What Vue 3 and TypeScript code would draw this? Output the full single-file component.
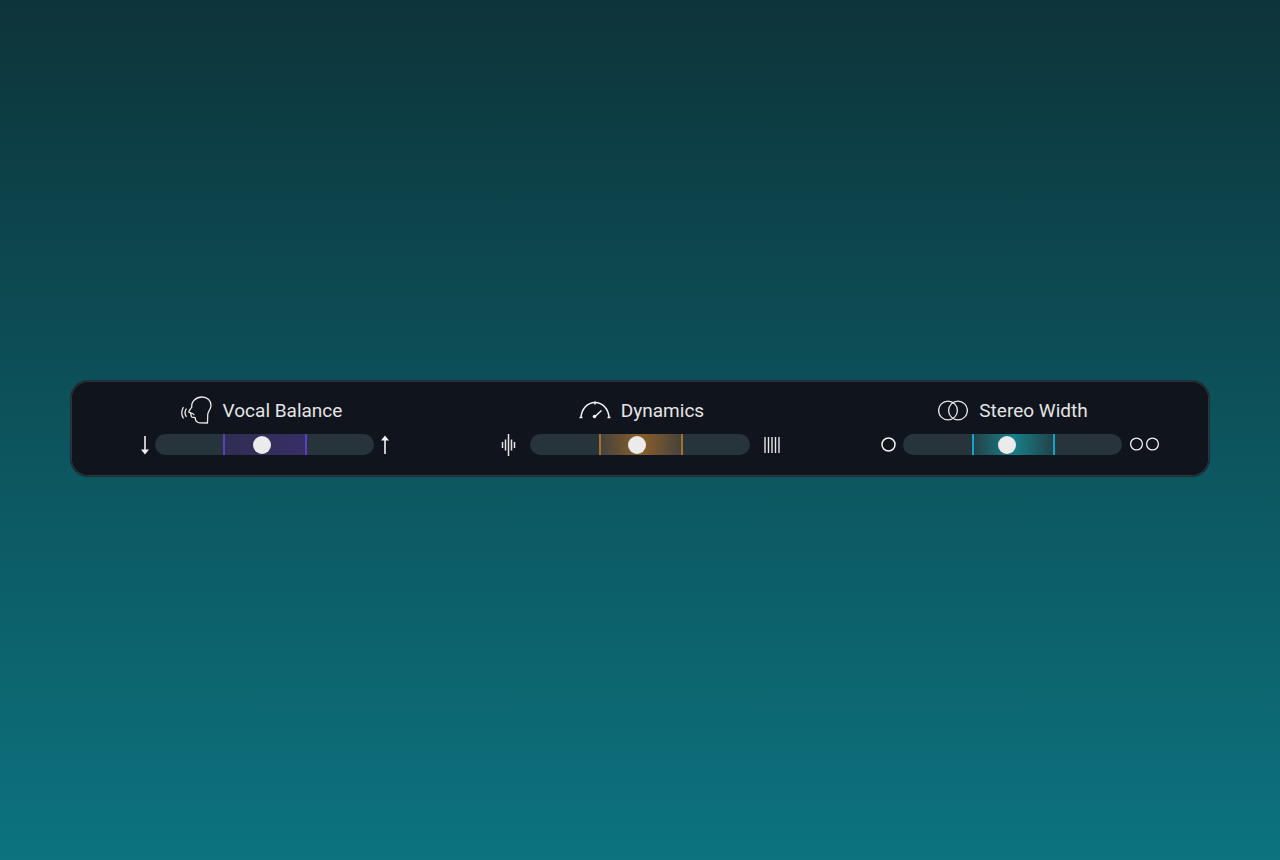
<script setup lang="ts">
const bands = {
  vocal: { left: '68px', width: '84px' },
  dynamics: { left: '69px', width: '84px' },
  stereo: { left: '69px', width: '83px' },
}
</script>

<template>
  <main class="page">
    <section class="panel">
      <div class="col">
        <div class="title t1">
          <svg width="32" height="30" viewBox="0 0 32 30" fill="none" stroke="#e8e8e8" stroke-width="1.3" stroke-linecap="round" stroke-linejoin="round">
            <path d="M26.5 28 L18.5 27.8 C15.5 27.5 14.2 26 14.2 22.6 L11 22.2 C9.8 21.8 10.4 20.6 10 19.8 C9.4 19 9.8 18.4 9.6 17.6 L7.8 17.2 C7.2 16.4 9.8 13.8 10.8 12 C10 6.5 15 2 21 2 C26.6 2 30.2 6 30 10.5 C29.8 14.5 27.2 16 26.8 19 C26.6 22 26.6 25 26.5 28 Z" />
            <path d="M9.8 18.2 C11 18.2 12.2 18.6 13 19.6" />
            <path d="M5.2 14 C3.8 16.3 3.8 19.2 5.2 21.5" />
            <path d="M2.2 12.5 C0.4 15.8 0.4 19.8 2.2 23" />
          </svg>
          <span>Vocal Balance</span>
        </div>
        <div class="row">
          <div class="slot left g5">
            <svg width="10" height="22" viewBox="0 0 10 22"><path d="M5 2V16" stroke="#f2f2f2" stroke-width="1.6" /><path d="M1 15.5H9L5 20.5Z" fill="#f2f2f2" /></svg>
          </div>
          <div class="track">
            <div class="band purple" :style="bands.vocal"></div>
            <div class="thumb th1"></div>
          </div>
          <div class="slot right g6">
            <svg width="10" height="22" viewBox="0 0 10 22"><path d="M5 20V6" stroke="#f2f2f2" stroke-width="1.6" /><path d="M1 6.5H9L5 1.5Z" fill="#f2f2f2" /></svg>
          </div>
        </div>
      </div>

      <div class="col">
        <div class="title t2">
          <svg width="32" height="20" viewBox="0 0 32 20" fill="none" stroke="#f0f0f0" stroke-width="1.6">
            <path d="M2 17.5 C2.5 9 8.5 2.5 16 2.5 C23.5 2.5 29.5 9 30 17.5" />
            <path d="M.5 17.5H3.5M28.5 17.5H31.5M16 1.5V4.5" />
            <path d="M16 16.5L22.5 10.5" />
            <circle cx="15.5" cy="16.5" r="1.8" fill="#f0f0f0" stroke="none" />
          </svg>
          <span>Dynamics</span>
        </div>
        <div class="row">
          <div class="slot left g14">
            <svg width="15" height="24" viewBox="0 0 15 24" stroke="#e6e6e6" stroke-width="1.5">
              <path d="M1.5 9V15M4.5 6.5V17.5M7.5 1V23M10.5 6.5V17.5M13.5 9V15" />
            </svg>
          </div>
          <div class="track wide">
            <div class="band amber" :style="bands.dynamics"></div>
            <div class="thumb th2"></div>
          </div>
          <div class="slot right g14">
            <svg width="16" height="18" viewBox="0 0 16 18" stroke="#e6e6e6" stroke-width="1.4">
              <path d="M1 1V17M4.5 1V17M8 1V17M11.5 1V17M15 1V17" />
            </svg>
          </div>
        </div>
      </div>

      <div class="col">
        <div class="title t3">
          <svg width="30" height="21" viewBox="0 0 30 21" fill="none" stroke="#e8e8e8" stroke-width="1.3">
            <circle cx="10" cy="10.5" r="9.4" />
            <circle cx="20" cy="10.5" r="9.4" />
          </svg>
          <span>Stereo Width</span>
        </div>
        <div class="row">
          <div class="slot left g7">
            <svg width="15" height="15" viewBox="0 0 15 15" fill="none" stroke="#f0f0f0" stroke-width="1.5"><circle cx="7.5" cy="7.5" r="6.5" /></svg>
          </div>
          <div class="track">
            <div class="band teal" :style="bands.stereo"></div>
            <div class="thumb th3"></div>
          </div>
          <div class="slot right g8">
            <svg width="30" height="15" viewBox="0 0 30 15" fill="none" stroke="#f0f0f0" stroke-width="1.3"><circle cx="6.5" cy="7" r="5.9" /><circle cx="22.5" cy="7" r="5.9" /></svg>
          </div>
        </div>
      </div>
    </section>
  </main>
</template>

<style scoped>
.page {
  box-sizing: border-box;
  width: 1280px;
  height: 860px;
  padding-top: 380px;
  padding-left: 70px;
  background: linear-gradient(180deg, #0d343a 0%, #0c737f 100%);
  font-family: Roboto, "Liberation Sans", sans-serif;
}
.panel {
  box-sizing: border-box;
  width: 1140px;
  height: 97px;
  padding: 17px 7px 0 1px;
  display: grid;
  grid-template-columns: 385px 366px 379px;
  background: #10141c;
  border: 1px solid #222e37;
  border-radius: 18px;
  box-shadow: inset 0 0 0 1px #2b3841;
}
.col {
  display: flex;
  flex-direction: column;
  align-items: center;
  gap: 12px;
}
.title {
  height: 24px;
  display: flex;
  align-items: center;
  gap: 10px;
  color: #e4e4e4;
  font-size: 19px;
  white-space: nowrap;
}
.t1 { margin-left: -6px; }
.t2 { margin-left: 3px; }
.t3 { margin-left: 1px; gap: 11px; }
.row {
  display: flex;
  align-items: center;
  height: 21px;
}
.slot {
  box-sizing: border-box;
  width: 40px;
  flex: none;
  display: flex;
  align-items: center;
}
.slot svg { flex: none; }
.left { justify-content: flex-end; }
.right { justify-content: flex-start; }
.left.g5 { padding-right: 5px; }
.right.g6 { padding-left: 6px; }
.left.g14 { padding-right: 14px; }
.right.g14 { padding-left: 14px; }
.left.g7 { padding-right: 7px; }
.right.g8 { padding-left: 8px; }
.track {
  position: relative;
  flex: none;
  width: 219px;
  height: 21px;
  border-radius: 10.5px;
  background: #27343c;
}
.wide { width: 220px; }
.band {
  position: absolute;
  top: 0;
  bottom: 0;
  box-sizing: border-box;
  border-left: 2px solid;
  border-right: 2px solid;
}
.purple {
  background: linear-gradient(90deg, #2f2e52, #382e66);
  border-color: #5a3fc6;
}
.amber {
  background: linear-gradient(90deg, #46423d, #8a5f2a 50%, #46423d);
  border-color: #a86f2b;
}
.teal {
  background: linear-gradient(90deg, #234249, #16808a 50%, #234249);
  border-color: #0ea6cf;
}
.thumb {
  position: absolute;
  top: 1.5px;
  width: 18px;
  height: 18px;
  border-radius: 50%;
  background: #ebebeb;
}
.th1 { left: 97.5px; }
.th2 { left: 98px; }
.th3 { left: 94.5px; }
</style>
